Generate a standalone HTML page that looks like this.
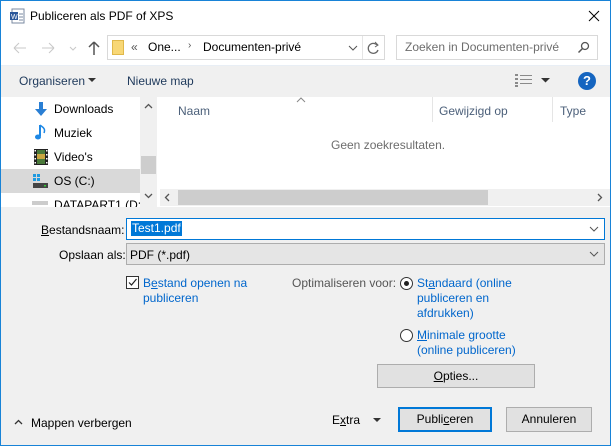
<!DOCTYPE html>
<html><head><meta charset="utf-8"><style>
*{margin:0;padding:0;box-sizing:border-box}
body{width:611px;height:446px;overflow:hidden;background:#f0f0f0;font-family:"Liberation Sans",sans-serif;font-size:12px;color:#000;position:relative}
.a{position:absolute;white-space:nowrap}
.b{color:#0066cc}
u{text-decoration:underline}
</style></head><body>
<div class="a" style="left:0;top:0;width:611px;height:446px;border:1px solid #1883d7;border-top:none"></div>
<div class="a" style="left:1px;top:0;width:609px;height:1px;background:#1883d7"></div>
<!-- title -->
<div class="a" style="left:1px;top:1px;width:609px;height:64px;background:#fff"></div>
<svg class="a" style="left:9px;top:8px" width="16" height="16"><rect x="3" y="1" width="12" height="14" fill="#fff" stroke="#7a8aa0"/><rect x="1" y="4" width="8" height="8" fill="#2b579a"/><text x="2" y="11" font-size="7" fill="#fff" font-family="Liberation Sans">W</text><path d="M10 6h4M10 9h4M10 12h4" stroke="#7a8aa0"/></svg>
<div class="a" style="left:30px;top:9px;font-size:12px">Publiceren als PDF of XPS</div>
<svg class="a" style="left:588px;top:10px" width="12" height="12"><path d="M1 1L11 11M11 1L1 11" stroke="#000" stroke-width="1"/></svg>
<!-- nav -->
<svg class="a" style="left:12px;top:40px" width="90" height="16"><path d="M2 8h12M2 8l5-5M2 8l5 5" stroke="#c8c8c8" fill="none"/><path d="M30 8h12M42 8l-5-5M42 8l-5 5" stroke="#c8c8c8" fill="none"/><path d="M58 7l3 3 3-3" stroke="#c8c8c8" fill="none"/><path d="M82 2v13M82 2l-5 5M82 2l5 5" stroke="#555" stroke-width="1.5" fill="none"/></svg>
<div class="a" style="left:107px;top:35px;width:278px;height:25px;border:1px solid #d9d9d9;background:#fff"></div>
<div class="a" style="left:112px;top:40px;width:12px;height:15px;background:#f8d775;border:1px solid #e0b84a"></div>
<div class="a" style="left:131px;top:40px;color:#555">«</div>
<div class="a" style="left:148px;top:40px">One...</div>
<div class="a" style="left:188px;top:40px;color:#555;font-size:10px">›</div>
<div class="a" style="left:203px;top:40px">Documenten-privé</div>
<svg class="a" style="left:348px;top:44px" width="10" height="8"><path d="M1 2l4 4 4-4" stroke="#555" fill="none"/></svg>
<div class="a" style="left:362px;top:36px;width:1px;height:23px;background:#e5e5e5"></div>
<svg class="a" style="left:367px;top:41px" width="14" height="14"><path d="M10 4A5 5 0 1 0 11 9" stroke="#666" fill="none" stroke-width="1.3"/><path d="M8 1l3 3-3 2" stroke="#666" fill="none"/></svg>
<div class="a" style="left:396px;top:35px;width:202px;height:25px;border:1px solid #d9d9d9;background:#fff"></div>
<div class="a" style="left:405px;top:40px;color:#6d6d6d">Zoeken in Documenten-privé</div>
<svg class="a" style="left:577px;top:41px" width="13" height="13"><circle cx="8" cy="5" r="3.5" stroke="#555" fill="none" stroke-width="1.3"/><path d="M5.5 7.5L1.5 11.5" stroke="#555" stroke-width="1.5"/></svg>
<!-- toolbar -->
<div class="a" style="left:1px;top:65px;width:609px;height:32px;background:#f0f0f0;border-top:1px solid #e8eef5"></div>
<div class="a" style="left:19px;top:74px;color:#1e395b">Organiseren</div>
<svg class="a" style="left:88px;top:78px" width="8" height="5"><path d="M0 0h8L4 4z" fill="#333"/></svg>
<div class="a" style="left:127px;top:74px;color:#1e395b">Nieuwe map</div>
<svg class="a" style="left:515px;top:74px" width="18" height="13"><g fill="#8a8a8a"><rect x="0" y="0" width="3" height="2"/><rect x="0" y="4" width="3" height="2"/><rect x="0" y="8" width="3" height="2"/><rect x="0" y="11" width="3" height="2"/><rect x="5" y="1" width="12" height="1"/><rect x="5" y="5" width="12" height="1"/><rect x="5" y="9" width="12" height="1"/></g></svg>
<svg class="a" style="left:541px;top:78px" width="9" height="5"><path d="M0 0h9L4.5 4.5z" fill="#333"/></svg>
<div class="a" style="left:578px;top:72px;width:18px;height:18px;border-radius:50%;background:#1565c0;color:#fff;font-weight:bold;text-align:center;line-height:18px;font-size:13px">?</div>
<!-- left pane -->
<div class="a" style="left:1px;top:97px;width:155px;height:110px;background:#fff"></div>
<div class="a" style="left:1px;top:169px;width:139px;height:24px;background:#d9d9d9"></div>
<svg class="a" style="left:33px;top:101px" width="16" height="16"><path d="M6 1h4v7h4l-6 7-6-7h4z" fill="#2a7fd4"/></svg>
<div class="a" style="left:54px;top:102px">Downloads</div>
<svg class="a" style="left:35px;top:124px" width="12" height="17"><path d="M5 1v11" stroke="#1e88e5" stroke-width="2"/><ellipse cx="3" cy="13" rx="3" ry="2.5" fill="#1e88e5"/><path d="M5 1c2 2 6 3 4 8" stroke="#1e88e5" stroke-width="1.5" fill="none"/></svg>
<div class="a" style="left:54px;top:126px">Muziek</div>
<svg class="a" style="left:34px;top:149px" width="14" height="16"><rect width="14" height="16" fill="#222"/><rect x="3" y="1" width="8" height="14" fill="#4a7a3a"/><rect x="3" y="5" width="8" height="5" fill="#c9a640"/><g fill="#fff"><rect x="0.5" y="1" width="1.5" height="1.5"/><rect x="0.5" y="5" width="1.5" height="1.5"/><rect x="0.5" y="9" width="1.5" height="1.5"/><rect x="0.5" y="13" width="1.5" height="1.5"/><rect x="12" y="1" width="1.5" height="1.5"/><rect x="12" y="5" width="1.5" height="1.5"/><rect x="12" y="9" width="1.5" height="1.5"/><rect x="12" y="13" width="1.5" height="1.5"/></g></svg>
<div class="a" style="left:54px;top:150px">Video's</div>
<svg class="a" style="left:32px;top:173px" width="16" height="16"><g fill="#1e9ae0"><rect x="1" y="1" width="3" height="3"/><rect x="5" y="1" width="3" height="3"/><rect x="1" y="5" width="3" height="3"/><rect x="5" y="5" width="3" height="3"/></g><rect x="1" y="10" width="15" height="5" fill="#444"/><rect x="12" y="12" width="2" height="1.5" fill="#3c3"/></svg>
<div class="a" style="left:54px;top:174px">OS (C:)</div>
<div class="a" style="left:32px;top:201px;width:16px;height:4px;background:#ccc"></div>
<div class="a" style="left:54px;top:198px;height:9px;overflow:hidden;line-height:14px">DATAPART1 (D:)</div>
<div class="a" style="left:140px;top:97px;width:17px;height:110px;background:#f0f0f0"></div>
<svg class="a" style="left:144px;top:103px" width="9" height="6"><path d="M1 5l3.5-3.5L8 5" stroke="#555" fill="none" stroke-width="1.3"/></svg>
<div class="a" style="left:141px;top:156px;width:15px;height:18px;background:#cdcdcd"></div>
<svg class="a" style="left:144px;top:193px" width="9" height="6"><path d="M1 1l3.5 3.5L8 1" stroke="#555" fill="none" stroke-width="1.3"/></svg>
<!-- right pane -->
<div class="a" style="left:157px;top:97px;width:453px;height:110px;background:#fff"></div>
<svg class="a" style="left:296px;top:97px" width="10" height="6"><path d="M1 5l4-4 4 4" stroke="#888" fill="none"/></svg>
<div class="a" style="left:178px;top:104px;color:#4c607a">Naam</div>
<div class="a" style="left:432px;top:97px;width:1px;height:25px;background:#e5e5e5"></div>
<div class="a" style="left:439px;top:104px;color:#4c607a">Gewijzigd op</div>
<div class="a" style="left:552px;top:97px;width:1px;height:25px;background:#e5e5e5"></div>
<div class="a" style="left:560px;top:104px;color:#4c607a">Type</div>
<div class="a" style="left:331px;top:138px;color:#6d6d6d">Geen zoekresultaten.</div>
<div class="a" style="left:160px;top:189px;width:450px;height:17px;background:#f0f0f0"></div>
<div class="a" style="left:178px;top:190px;width:310px;height:15px;background:#cdcdcd"></div>
<svg class="a" style="left:164px;top:193px" width="6" height="9"><path d="M5 1L1.5 4.5 5 8" stroke="#555" fill="none" stroke-width="1.3"/></svg>
<svg class="a" style="left:597px;top:193px" width="6" height="9"><path d="M1 1l3.5 3.5L1 8" stroke="#555" fill="none" stroke-width="1.3"/></svg>
<!-- form -->
<div class="a" style="left:41px;top:223px"><u>B</u>estandsnaam:</div>
<div class="a" style="left:126px;top:218px;width:479px;height:22px;border:1px solid #0078d7;background:#fff"></div>
<div class="a" style="left:131px;top:221px;background:#0078d7;color:#fff;padding:0 1px;line-height:15px">Test1.pdf</div>
<svg class="a" style="left:589px;top:226px" width="10" height="6"><path d="M1 1l4 4 4-4" stroke="#555" fill="none"/></svg>
<div class="a" style="left:59px;top:248px">Opslaan als:</div>
<div class="a" style="left:126px;top:243px;width:479px;height:22px;border:1px solid #adadad;background:#e5e5e5"></div>
<div class="a" style="left:130px;top:248px">PDF (*.pdf)</div>
<svg class="a" style="left:589px;top:251px" width="10" height="6"><path d="M1 1l4 4 4-4" stroke="#555" fill="none"/></svg>
<div class="a" style="left:126px;top:276px;width:13px;height:13px;border:1px solid #333;background:#fff"></div>
<svg class="a" style="left:127px;top:277px" width="11" height="11"><path d="M2 5.5l2.5 2.5L9.5 2" stroke="#222" fill="none" stroke-width="1.2"/></svg>
<div class="a b" style="left:143px;top:276px;line-height:15px">B<u>e</u>stand openen na<br>publiceren</div>
<div class="a" style="left:292px;top:276px;color:#555">Optimaliseren voor:</div>
<div class="a" style="left:400px;top:277px;width:13px;height:13px;border:1px solid #333;border-radius:50%;background:#fff"></div>
<div class="a" style="left:404px;top:281px;width:5px;height:5px;border-radius:50%;background:#222"></div>
<div class="a b" style="left:417px;top:276px;line-height:15px">St<u>a</u>ndaard (online<br>publiceren en<br>afdrukken)</div>
<div class="a" style="left:400px;top:329px;width:13px;height:13px;border:1px solid #333;border-radius:50%;background:#fff"></div>
<div class="a b" style="left:417px;top:328px;line-height:15px"><u>M</u>inimale grootte<br>(online publiceren)</div>
<div class="a" style="left:377px;top:364px;width:158px;height:24px;border:1px solid #adadad;background:#e1e1e1;text-align:center;line-height:22px"><u>O</u>pties...</div>
<svg class="a" style="left:14px;top:419px" width="9" height="6"><path d="M1 5l3.5-3.5L8 5" stroke="#333" fill="none" stroke-width="1.3"/></svg>
<div class="a" style="left:31px;top:416px">Mappen verbergen</div>
<div class="a" style="left:332px;top:413px">E<u>x</u>tra</div>
<svg class="a" style="left:373px;top:418px" width="8" height="5"><path d="M0 0h8L4 4z" fill="#333"/></svg>
<div class="a" style="left:398px;top:407px;width:94px;height:25px;border:2px solid #0078d7;background:#e1e1e1;text-align:center;line-height:21px">Publi<u>c</u>eren</div>
<div class="a" style="left:506px;top:407px;width:86px;height:25px;border:1px solid #adadad;background:#e1e1e1;text-align:center;line-height:23px">Annuleren</div>
</body></html>
